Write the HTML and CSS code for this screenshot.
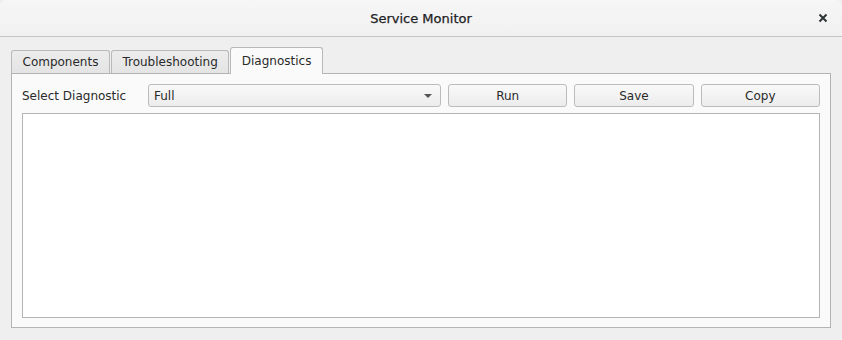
FILE: index.html
```html
<!DOCTYPE html>
<html lang="en">
<head>
  <meta charset="UTF-8">
  <meta name="viewport" content="width=device-width, initial-scale=1.0">
  <title>Service Monitor</title>
  <link rel="stylesheet" href="styles.css">
</head>
<body>
  <div class="window">
    <header class="titlebar">
      <span class="title">Service Monitor</span>
      <button class="close" aria-label="Close">
        <svg width="10" height="10" viewBox="0 0 10 10">
          <path d="M1.5 1.5 L8.5 8.5 M8.5 1.5 L1.5 8.5" stroke="#2e3436" stroke-width="2" stroke-linecap="butt" fill="none"/>
        </svg>
      </button>
    </header>
    <main class="content">
      <div class="tabs">
        <div class="tab-bar">
          <div class="tab">Components</div>
          <div class="tab">Troubleshooting</div>
          <div class="tab active">Diagnostics</div>
        </div>
        <div class="tab-pane">
          <div class="toolbar">
            <label class="label" for="diag">Select Diagnostic</label>
            <div class="combo" id="diag">
              <span>Full</span>
              <span class="arrow"></span>
            </div>
            <button class="btn">Run</button>
            <button class="btn">Save</button>
            <button class="btn">Copy</button>
          </div>
          <div class="output"></div>
        </div>
      </div>
    </main>
  </div>
</body>
</html>
```

FILE: styles.css
```css
* {
  margin: 0;
  padding: 0;
  box-sizing: border-box;
}
body {
  font-family: 'DejaVu Sans', 'Noto Sans', sans-serif;
  font-size: 12px;
  color: #2a2a2a;
  background: #efefef;
  width: 842px;
  height: 340px;
  overflow: hidden;
}
.window {
  height: 340px;
  background: #efefef;
}
.titlebar {
  position: relative;
  height: 37px;
  background: linear-gradient(#f6f6f6, #f1f1f1);
  border-bottom: 1px solid #c4c4c4;
  border-radius: 6px 6px 0 0;
  display: flex;
  align-items: center;
  justify-content: center;
}
.title {
  font-size: 13px;
  color: #1e2224;
  margin-top: 1px;
  -webkit-text-stroke: 0.25px #1e2224;
}
.close {
  position: absolute;
  right: 14px;
  top: 13px;
  width: 10px;
  height: 10px;
  border: none;
  background: none;
  display: flex;
}
.content {
  padding: 10px 11px 12px;
}
.tab-bar {
  display: flex;
  align-items: flex-end;
  height: 26px;
  position: relative;
  z-index: 1;
}
.tab {
  height: 23px;
  padding: 0 10.5px;
  border: 1px solid #b9b9b9;
  border-bottom: none;
  border-radius: 3px 3px 0 0;
  background: linear-gradient(#ececec, #e4e4e4);
  display: flex;
  align-items: center;
  color: #2a2a2a;
}
.tab + .tab {
  margin-left: 1px;
}
.tab.active {
  height: 27px;
  margin-bottom: -1px;
  background: #fafafa;
}
.tab-pane {
  height: 255px;
  border: 1px solid #b4b4b4;
  background: #fafafa;
  padding: 10px 10px 9px;
  display: flex;
  flex-direction: column;
  gap: 6px;
}
.toolbar {
  display: grid;
  grid-template-columns: 119px 293px 1fr 1fr 1fr;
  column-gap: 7px;
  height: 23px;
  align-items: stretch;
}
.label {
  display: flex;
  align-items: center;
}
.combo, .btn {
  border: 1px solid #bcbcbc;
  border-radius: 3px;
  background: linear-gradient(#f9f9f9, #ececec);
  font-family: inherit;
  font-size: 12px;
  color: #2a2a2a;
}
.combo {
  display: flex;
  align-items: center;
  justify-content: space-between;
  padding: 0 8px 0 5px;
}
.arrow {
  width: 0;
  height: 0;
  border-left: 4px solid transparent;
  border-right: 4px solid transparent;
  border-top: 4px solid #555555;
}
.btn {
  cursor: pointer;
}
.output {
  flex: 1;
  background: #ffffff;
  border: 1px solid #b4b4b4;
}
```
